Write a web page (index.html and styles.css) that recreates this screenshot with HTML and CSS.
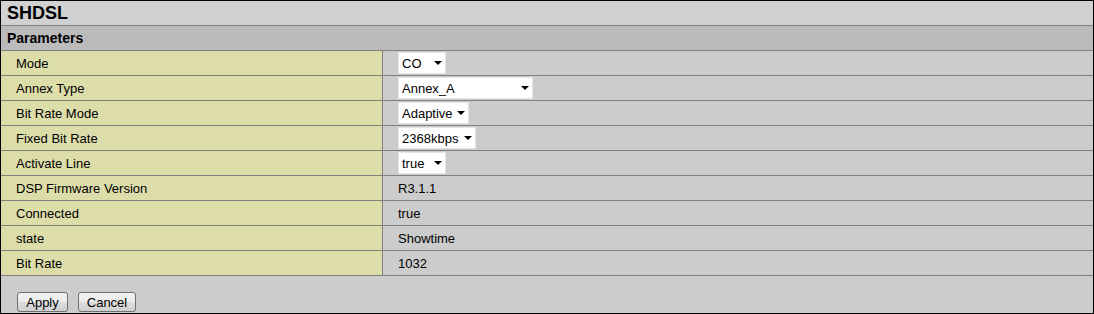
FILE: index.html
```html
<!DOCTYPE html>
<html lang="en">
<head>
  <meta charset="UTF-8">
  <title>SHDSL</title>
  <link rel="stylesheet" href="styles.css">
</head>
<body>
  <div class="panel">
    <div class="panel-title">SHDSL</div>
    <div class="group-title">Parameters</div>

    <div class="params">
      <div class="label">Mode</div>
      <div class="value">
        <span class="select-wrap w-co">
          <select><option>CO</option><option>CPE</option></select>
        </span>
      </div>

      <div class="label">Annex Type</div>
      <div class="value">
        <span class="select-wrap w-annex">
          <select><option>Annex_A</option><option>Annex_B</option></select>
        </span>
      </div>

      <div class="label">Bit Rate Mode</div>
      <div class="value">
        <span class="select-wrap w-mode">
          <select><option>Adaptive</option><option>Fixed</option></select>
        </span>
      </div>

      <div class="label">Fixed Bit Rate</div>
      <div class="value">
        <span class="select-wrap w-rate">
          <select><option>2368kbps</option></select>
        </span>
      </div>

      <div class="label">Activate Line</div>
      <div class="value">
        <span class="select-wrap w-co">
          <select><option>true</option><option>false</option></select>
        </span>
      </div>

      <div class="label">DSP Firmware Version</div>
      <div class="value">R3.1.1</div>

      <div class="label">Connected</div>
      <div class="value">true</div>

      <div class="label">state</div>
      <div class="value">Showtime</div>

      <div class="label">Bit Rate</div>
      <div class="value">1032</div>
    </div>

    <div class="actions">
      <button class="btn btn-apply">Apply</button>
      <button class="btn btn-cancel">Cancel</button>
    </div>
  </div>
</body>
</html>
```

FILE: styles.css
```css
body {
  margin: 0;
  padding: 0;
  font-family: "Liberation Sans", Arial, sans-serif;
  font-size: 13px;
  color: #000;
  background: #cccccc;
}

.panel {
  box-sizing: border-box;
  width: 1094px;
  height: 314px;
  border: 1px solid #000;
  background: #cccccc;
}

.panel-title {
  height: 24px;
  line-height: 25px;
  padding-left: 6px;
  font-size: 18px;
  font-weight: bold;
  background: #d1d1d1;
  border-bottom: 1px solid #808080;
}

.group-title {
  height: 24px;
  line-height: 25px;
  padding-left: 6px;
  font-size: 14px;
  font-weight: bold;
  background: #bbbbbb;
  border-bottom: 1px solid #808080;
}

.params {
  display: grid;
  grid-template-columns: 382px 1fr;
}

.label,
.value {
  box-sizing: border-box;
  height: 25px;
  padding-left: 15px;
  display: flex;
  align-items: center;
  border-bottom: 1px solid #808080;
}

.label {
  background: #ddddaa;
  border-right: 1px solid #808080;
}

.value {
  background: #cccccc;
}

.select-wrap {
  position: relative;
  display: inline-block;
  height: 22px;
}

.select-wrap select {
  -webkit-appearance: none;
  appearance: none;
  box-sizing: border-box;
  width: 100%;
  height: 22px;
  margin: 0;
  padding: 0 0 0 3px;
  border: 1px solid #e4e4e4;
  border-radius: 0;
  background: #fff;
  font-family: "Liberation Sans", Arial, sans-serif;
  font-size: 13px;
  color: #000;
  outline: none;
}

.select-wrap::after {
  content: "";
  position: absolute;
  right: 4px;
  top: 9px;
  border-left: 4px solid transparent;
  border-right: 4px solid transparent;
  border-top: 4px solid #000;
  pointer-events: none;
}

.w-co { width: 48px; }
.w-annex { width: 135px; }
.w-mode { width: 71px; }
.w-rate { width: 78px; }

.actions {
  padding: 16px 0 0 16px;
  display: flex;
  gap: 10px;
}

.btn {
  box-sizing: border-box;
  height: 20px;
  padding: 0;
  border: 1px solid #707070;
  border-radius: 3px;
  background: linear-gradient(#f2f2f2, #ebebeb 50%, #dddddd 51%, #cfcfcf);
  font-family: "Liberation Sans", Arial, sans-serif;
  font-size: 13px;
  color: #000;
}

.btn-apply { width: 51px; }
.btn-cancel { width: 58px; }
```
